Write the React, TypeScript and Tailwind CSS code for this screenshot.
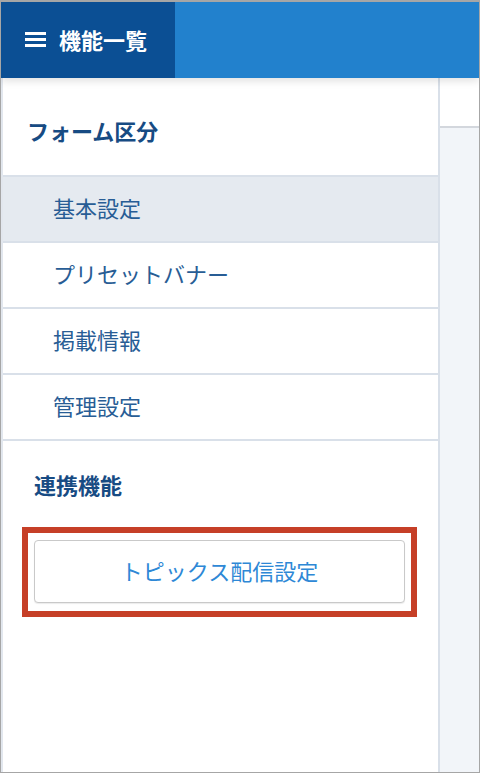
import React from "react";

const jp = { fontFamily: '"Noto Sans CJK JP", "Noto Sans", sans-serif' };

function Row({ label, active }: { label: string; active?: boolean }) {
  return (
    <div
      className={`h-[66px] flex items-center pl-[50px] pb-[4px] border-b-2 border-[#d9e0e9] text-[22px] text-[#285d95] ${
        active ? "bg-[#e5eaf0]" : "bg-white"
      }`}
    >
      {label}
    </div>
  );
}

export default function App() {
  return (
    <div
      className="w-[480px] h-[773px] flex flex-col overflow-hidden border border-t-2 border-[#a6a6a6] bg-white"
      style={jp}
    >
      <header className="relative z-10 h-[76px] flex shrink-0 shadow-[0_3px_8px_rgba(0,0,0,0.12)]">
        <div className="w-[174px] bg-[#0b4f94] flex items-center pl-[24px] pb-[2px] gap-[13px]">
          <svg width="21" height="16" viewBox="0 0 21 16">
            <rect x="0" y="1" width="21" height="3" fill="#fff" />
            <rect x="0" y="7" width="21" height="3" fill="#fff" />
            <rect x="0" y="13" width="21" height="3" fill="#fff" />
          </svg>
          <span className="text-white text-[22px] font-bold">機能一覧</span>
        </div>
        <div className="flex-1 bg-[#2281cd]" />
      </header>
      <div className="flex flex-1 min-h-0">
        <aside className="w-[439px] shrink-0 bg-white border-l-2 border-r-2 border-l-[#e2e7ee] border-r-[#d9e0e9] flex flex-col">
          <div className="h-[99px] flex items-center pl-[24px] pt-[8px] border-b-2 border-[#d9e0e9] text-[22px] font-bold text-[#174b83]">
            フォーム区分
          </div>
          <Row label="基本設定" active />
          <Row label="プリセットバナー" />
          <Row label="掲載情報" />
          <Row label="管理設定" />
          <div className="pt-[28px] pl-[31px] text-[22px] font-bold text-[#174b83] leading-[30px]">
            連携機能
          </div>
          <div className="mt-[28px] ml-[19px] w-[395px] border-[6px] border-[#c63f27] pt-[7px] pb-[8px] px-[6px]">
            <button className="w-full h-[63px] pb-[3px] bg-white border border-[#c9c9c9] rounded-[4px] shadow-[0_1px_1px_rgba(0,0,0,0.08)] text-[22px] text-[#2e88d6]">
              トピックス配信設定
            </button>
          </div>
        </aside>
        <div className="flex-1 flex flex-col">
          <div className="h-[50px] bg-white border-b-2 border-[#d3d7dd]" />
          <div className="flex-1 bg-[#f2f5f9]" />
        </div>
      </div>
    </div>
  );
}
